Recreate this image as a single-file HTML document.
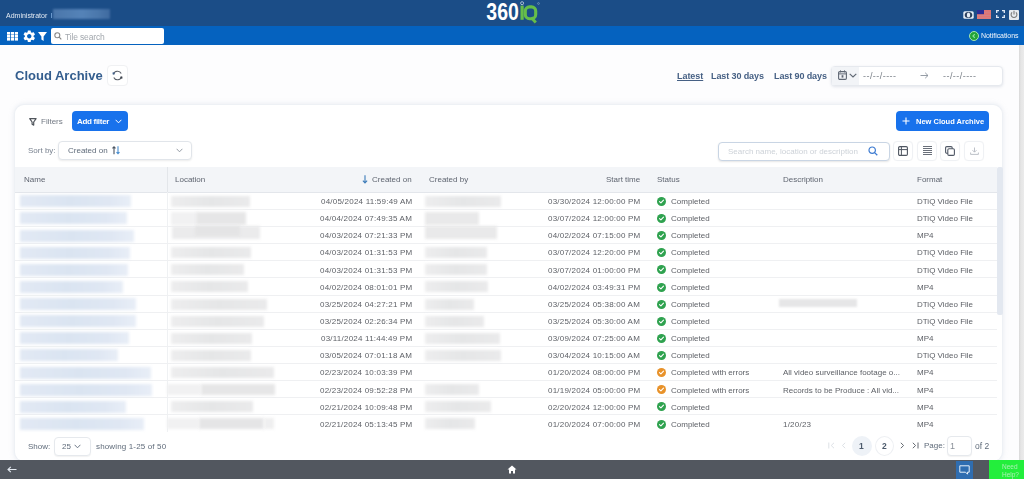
<!DOCTYPE html>
<html><head><meta charset="utf-8">
<style>
*{box-sizing:border-box;margin:0;padding:0}
html,body{width:1024px;height:479px;overflow:hidden;background:#fdfdfe;font-family:"Liberation Sans",sans-serif;position:relative}
.a{position:absolute}
.t{white-space:nowrap;line-height:1;will-change:transform}
#hdr{left:0;top:0;width:1024px;height:26px;background:#1b4d87}
#nav{left:0;top:26px;width:1024px;height:19px;background:#0562bf}
#sb{left:1018.5px;top:45px;width:5.5px;height:415px;background:linear-gradient(90deg,#d9d9d9,#e6e6e6 40%,#ebebeb)}
#bot{left:0;top:460px;width:1024px;height:19px;background:#52575f}
.card{left:15px;top:104.5px;width:987px;height:356px;background:#fff;border-radius:9px;box-shadow:0 0 0 1px #eef1f5,0 0 5px 1px rgba(190,200,215,.35)}
.th{color:#5f6570;font-size:8px}
.rl{left:15px;width:982px;height:1px;background:#eff0f2}
.c{font-size:8px;color:#5e6167}
.dt{letter-spacing:.22px}
.bb{height:12px;background:linear-gradient(90deg,#e2e9f4,#dae4f1 45%,#dfe7f3 80%,#e8eef7);filter:blur(1.8px)}
.gb{height:11px;background:linear-gradient(90deg,#ededee,#e5e6e7 50%,#eaeaeb);filter:blur(1.8px)}
.ib{top:140.5px;width:20px;height:20.5px;border:1px solid #eff1f4;border-radius:4px;background:#fff;box-shadow:0 0 1px rgba(0,0,0,.04)}
</style></head><body>
<div id="hdr" class="a"></div>
<div id="nav" class="a"></div>
<div id="sb" class="a"></div>

<!-- header -->
<div class="a t" style="left:6px;top:11.5px;font-size:7px;color:#e3eaf3">Administrator</div>
<div class="a" style="left:50.5px;top:12.5px;width:1.3px;height:5.5px;background:#6d9bd0"></div>
<div class="a" style="left:53px;top:8.5px;width:57px;height:10.5px;background:linear-gradient(90deg,#4a76aa,#5583b8 50%,#4a77ab 80%,#3f6aa0);filter:blur(1.2px)"></div>
<svg class="a" style="left:484px;top:0px" width="58" height="25" viewBox="0 0 58 25"><text x="2.3" y="19.8" font-family="Liberation Sans" font-weight="bold" font-size="24.3" fill="#fff" textLength="32.5" lengthAdjust="spacingAndGlyphs">360</text><rect x="36.5" y="5.6" width="3.2" height="14.2" fill="#66bd49"/><circle cx="38.1" cy="3.2" r="1.5" stroke="#c9d6e2" stroke-width=".8" fill="none"/><rect x="41.3" y="6.9" width="10.4" height="11.8" rx="4.2" stroke="#66bd49" stroke-width="3.1" fill="none"/><path d="M47.2 17.5L51.8 22.5" stroke="#66bd49" stroke-width="3" /><circle cx="54.5" cy="3.5" r=".9" stroke="#9fb4c8" stroke-width=".5" fill="none"/></svg>
<!-- right header icons -->
<svg class="a" style="left:963px;top:10.5px" width="11" height="8" viewBox="0 0 11 8"><rect x="0.3" y="0.3" width="10.4" height="7.4" rx="1.5" fill="#e8eff7"/><ellipse cx="5.5" cy="4" rx="3.8" ry="2.9" fill="#2b3f5c"/><ellipse cx="5.5" cy="4" rx="1.7" ry="2.6" fill="#e8eff7"/></svg>
<svg class="a" style="left:977px;top:10px" width="14" height="9" viewBox="0 0 14 9"><rect width="14" height="9" fill="#e07575"/><path d="M0 5.5H14 M7 2.2H14 M0 7.8H14" stroke="#c98a92" stroke-width="0.6"/><rect width="7" height="4.2" fill="#2a2d98"/></svg>
<svg class="a" style="left:995.5px;top:10px" width="9" height="8" viewBox="0 0 9 8"><path d="M0.7 3V0.7H3 M6 0.7H8.3V3 M8.3 5V7.3H6 M3 7.3H0.7V5" stroke="#e2ecf8" stroke-width="1.3" fill="none"/></svg>
<div class="a" style="left:1008.5px;top:9.5px;width:10px;height:10px;background:#e6eaef;border-radius:1px"></div>
<svg class="a" style="left:1009.5px;top:10px" width="8" height="9" viewBox="0 0 8 9"><path d="M5.9 2.4A2.9 2.9 0 1 1 2.1 2.4" stroke="#7a7a7a" stroke-width="1.1" fill="none"/><path d="M4 0.8V4.4" stroke="#7a7a7a" stroke-width="1.1"/></svg>

<!-- nav -->
<svg class="a" style="left:7px;top:32px" width="11" height="8.5" viewBox="0 0 11 8.5"><g fill="#fff"><rect x="0" y="0" width="3.2" height="2.6"/><rect x="4" y="0" width="3.2" height="2.6"/><rect x="8" y="0" width="3.2" height="2.6"/><rect x="0" y="3" width="3.2" height="2.6"/><rect x="4" y="3" width="3.2" height="2.6"/><rect x="8" y="3" width="3.2" height="2.6"/><rect x="0" y="6" width="3.2" height="2.6"/><rect x="4" y="6" width="3.2" height="2.6"/><rect x="8" y="6" width="3.2" height="2.6"/></g></svg>
<svg class="a" style="left:21.5px;top:28.5px" width="14.5" height="14.5" viewBox="0 0 24 24"><path fill="#fff" d="M19.14 12.94c.04-.3.06-.61.06-.94s-.02-.64-.07-.94l2.03-1.58a.49.49 0 0 0 .12-.61l-1.92-3.32a.488.488 0 0 0-.59-.22l-2.39.96c-.5-.38-1.03-.7-1.62-.94l-.36-2.54a.484.484 0 0 0-.48-.41h-3.84c-.24 0-.43.17-.47.41l-.36 2.54c-.59.24-1.13.57-1.62.94l-2.39-.96c-.22-.08-.47 0-.59.22L2.74 8.87c-.12.21-.08.47.12.61l2.03 1.58c-.05.3-.09.63-.09.94s.02.64.07.94l-2.03 1.58a.49.49 0 0 0-.12.61l1.92 3.32c.12.22.37.29.59.22l2.39-.96c.5.38 1.03.7 1.62.94l.36 2.54c.05.24.24.41.48.41h3.84c.24 0 .44-.17.47-.41l.36-2.54c.59-.24 1.13-.56 1.62-.94l2.39.96c.22.08.47 0 .59-.22l1.92-3.32c.12-.22.07-.47-.12-.61l-2.01-1.58zM12 15.6c-1.98 0-3.6-1.62-3.6-3.6s1.62-3.6 3.6-3.6 3.6 1.62 3.6 3.6-1.62 3.6-3.6 3.6z"/></svg>
<svg class="a" style="left:38px;top:32px" width="9" height="9" viewBox="0 0 9 9"><path d="M0 0H9L5.6 4.4V9L3.4 7.6V4.4Z" fill="#fff"/></svg>
<div class="a" style="left:51px;top:28px;width:113px;height:16px;background:#fff;border-radius:2px"></div>
<svg class="a" style="left:54px;top:32px" width="8" height="8" viewBox="0 0 8 8"><circle cx="3.3" cy="3.3" r="2.5" stroke="#888" stroke-width="1.1" fill="none"/><path d="M5.2 5.2L7.3 7.3" stroke="#888" stroke-width="1.2"/></svg>
<div class="a t" style="left:65px;top:32.5px;font-size:8.5px;color:#a3a8ae;letter-spacing:-.15px">Tile search</div>
<div class="a" style="left:968.5px;top:31px;width:10px;height:10px;border-radius:50%;background:#22a436;border:1px solid #a6e6ae"></div>
<svg class="a" style="left:970.5px;top:33px" width="6" height="6" viewBox="0 0 6 6"><path d="M3.8 1.2L2 3L3.8 4.8" stroke="#8fe09a" stroke-width="1.2" fill="none"/></svg>
<div class="a t" style="left:980.5px;top:32px;font-size:7px;color:#f2f6fb;letter-spacing:-.05px">Notifications</div>

<!-- title row -->
<div class="a t" style="left:15px;top:68.5px;font-size:13px;font-weight:bold;color:#335d8e">Cloud Archive</div>
<div class="a" style="left:106.5px;top:64.5px;width:21.5px;height:21.5px;border:1px solid #f0f1f3;border-radius:4px;background:#fff"></div>
<svg class="a" style="left:112px;top:70px" width="11" height="11" viewBox="0 0 11 11"><path d="M1.5 4.4A4.1 4.1 0 0 1 9.2 3.6 M9.5 6.6A4.1 4.1 0 0 1 1.8 7.4" stroke="#5a5f68" stroke-width="1.1" fill="none"/><rect x="0.6" y="2.4" width="2" height="2" fill="#3f5f8a"/><rect x="8.4" y="6.6" width="2" height="2" fill="#3d434c"/></svg>
<div class="a t" style="left:677px;top:71.5px;font-size:9px;font-weight:bold;color:#466084;text-decoration:underline;text-decoration-thickness:.8px;letter-spacing:-.05px">Latest</div>
<div class="a t" style="left:711px;top:71.5px;font-size:9px;font-weight:bold;color:#466084;letter-spacing:-.1px">Last 30 days</div>
<div class="a t" style="left:774px;top:71.5px;font-size:9px;font-weight:bold;color:#466084;letter-spacing:-.1px">Last 90 days</div>
<div class="a" style="left:831px;top:66px;width:172px;height:19.5px;border:1px solid #e6e9ee;border-radius:4px;background:#fff;box-shadow:0 1px 3px rgba(60,80,110,.14)"></div>
<div class="a" style="left:832px;top:67px;width:27px;height:18px;background:#f2f4f7"></div>
<svg class="a" style="left:838px;top:70px" width="9" height="10" viewBox="0 0 9 10"><rect x="0.6" y="1.6" width="7.8" height="7.8" rx="1.2" stroke="#5f6773" stroke-width="1.1" fill="none"/><path d="M0.6 3.9H8.4 M2.5 0.4V2.4 M6.5 0.4V2.4" stroke="#5f6773" stroke-width="1"/><rect x="3.6" y="5.2" width="1.8" height="2.4" fill="#5f6773"/></svg>
<svg class="a" style="left:849px;top:73px" width="8" height="5" viewBox="0 0 8 5"><path d="M0.7 0.8L4 4L7.3 0.8" stroke="#5f6773" stroke-width="1.1" fill="none"/></svg>
<div class="a t" style="left:863px;top:72px;font-size:9px;color:#7a8088;letter-spacing:.45px">--/--/----</div>
<svg class="a" style="left:920px;top:72px" width="9" height="7" viewBox="0 0 9 7"><path d="M0.5 3.5H8 M5.2 0.8L8 3.5L5.2 6.2" stroke="#8a929c" stroke-width="0.9" fill="none"/></svg>
<div class="a t" style="left:943px;top:72px;font-size:9px;color:#7a8088;letter-spacing:.45px">--/--/----</div>

<!-- card -->
<div class="a card"></div>
<svg class="a" style="left:29px;top:117.5px" width="8" height="8" viewBox="0 0 8 8"><path d="M0.7 0.7H7.1L4.7 4V7.1L3.1 6.3V4Z" stroke="#50555c" stroke-width="1.2" fill="none" stroke-linejoin="round"/></svg>
<div class="a t" style="left:41px;top:117.7px;font-size:8px;color:#737a84">Filters</div>
<div class="a" style="left:72.3px;top:110.8px;width:56px;height:20px;background:#1872ec;border-radius:4px"></div>
<div class="a t" style="left:76.7px;top:117.5px;font-size:8px;font-weight:bold;color:#fff;letter-spacing:-.3px">Add filter</div>
<svg class="a" style="left:115.3px;top:119px" width="7" height="5" viewBox="0 0 7 5"><path d="M0.6 0.8L3.5 3.8L6.4 0.8" stroke="#fff" stroke-width="1" fill="none"/></svg>
<div class="a" style="left:895.5px;top:110.8px;width:93.5px;height:20px;background:#1872ec;border-radius:4px"></div>
<svg class="a" style="left:902px;top:117px" width="8" height="8" viewBox="0 0 8 8"><path d="M4 0.5V7.5 M0.5 4H7.5" stroke="#fff" stroke-width="1.1"/></svg>
<div class="a t" style="left:916px;top:117.5px;font-size:7.5px;font-weight:bold;color:#fff">New Cloud Archive</div>
<div class="a t" style="left:28px;top:146.5px;font-size:8px;color:#7a8390">Sort by:</div>
<div class="a" style="left:58px;top:140.5px;width:134px;height:19px;border:1px solid #e1e5ea;border-radius:4px;box-shadow:0 1px 2px rgba(0,0,0,.08);background:#fff"></div>
<div class="a t" style="left:68px;top:146.5px;font-size:8px;color:#5f6b7a">Created on</div>
<svg class="a" style="left:112px;top:146px" width="8" height="8.5" viewBox="0 0 8 8.5"><path d="M2 8.2V0.9 M0.5 2.4L2 0.8L3.5 2.4" stroke="#4a5462" stroke-width="1.1" fill="none"/><path d="M6 0.3V7.6 M4.5 6.1L6 7.7L7.5 6.1" stroke="#4a8fd0" stroke-width="1.1" fill="none"/></svg>
<svg class="a" style="left:176px;top:148px" width="7" height="5" viewBox="0 0 7 5"><path d="M0.6 0.8L3.5 3.8L6.4 0.8" stroke="#8a929c" stroke-width="0.9" fill="none"/></svg>
<div class="a" style="left:718px;top:142px;width:172px;height:19px;border:1px solid #c9d5e4;border-radius:4px;box-shadow:0 1px 2px rgba(0,0,0,.1);background:#fff"></div>
<div class="a t" style="left:728px;top:148px;font-size:8px;color:#cdd2d8">Search name, location or description</div>
<svg class="a" style="left:868px;top:146px" width="10" height="10" viewBox="0 0 10 10"><circle cx="4.2" cy="4.2" r="3.2" stroke="#3d7bd1" stroke-width="1.2" fill="none"/><path d="M6.6 6.6L9.3 9.3" stroke="#3d7bd1" stroke-width="1.3"/></svg>
<div class="a ib" style="left:893px"></div>
<div class="a ib" style="left:917px"></div>
<div class="a ib" style="left:940px"></div>
<div class="a ib" style="left:964px"></div>
<svg class="a" style="left:898px;top:146px" width="10" height="10" viewBox="0 0 10 10"><rect x="0.6" y="0.6" width="8.8" height="8.8" rx="1.2" stroke="#4f5661" stroke-width="1.1" fill="none"/><path d="M0.6 3.6H9.4 M3.4 0.6V9.4" stroke="#4f5661" stroke-width="1"/></svg>
<svg class="a" style="left:923px;top:146px" width="9" height="10" viewBox="0 0 9 10"><path d="M0 0.5H9 M0 2.5H9 M0 4.5H9 M0 6.5H9 M0 8.5H9" stroke="#6a707a" stroke-width="1"/></svg>
<svg class="a" style="left:945px;top:146px" width="10" height="10" viewBox="0 0 10 10"><rect x="0.6" y="0.6" width="6.6" height="6.6" rx="1.2" stroke="#505866" stroke-width="1.1" fill="none"/><rect x="2.8" y="2.8" width="6.6" height="6.6" rx="1.2" stroke="#505866" stroke-width="1.1" fill="#fff"/></svg>
<svg class="a" style="left:970px;top:147px" width="9" height="8" viewBox="0 0 9 8"><path d="M4.5 0.5V5 M2.5 3.2L4.5 5.2L6.5 3.2 M0.6 5.5V7.4H8.4V5.5" stroke="#b5bac2" stroke-width="0.9" fill="none"/></svg>

<!-- table header -->
<div class="a" style="left:15px;top:166.8px;width:982px;height:25.8px;background:#f3f5f8;border-bottom:1px solid #e3e6eb"></div>
<div class="a" style="left:167px;top:167px;width:1px;height:25px;background:#e3e6ea"></div><div class="a" style="left:167px;top:192px;width:1px;height:240px;background:#eff1f3"></div>
<div class="a t th" style="left:24px;top:176px">Name</div>
<div class="a t th" style="left:175px;top:176px">Location</div>
<svg class="a" style="left:362px;top:175px" width="6" height="9" viewBox="0 0 6 9"><path d="M3 0.3V8 M0.9 5.7L3 8L5.1 5.7" stroke="#3a7ab8" stroke-width="1.1" fill="none"/></svg>
<div class="a t th" style="right:612px;top:176px">Created on</div>
<div class="a t th" style="left:429px;top:176px">Created by</div>
<div class="a t th" style="right:384px;top:176px">Start time</div>
<div class="a t th" style="left:657px;top:176px">Status</div>
<div class="a t th" style="left:783px;top:176px">Description</div>
<div class="a t th" style="left:917px;top:176px">Format</div>
<div class="a" style="left:997px;top:167px;width:6px;height:148px;background:#e3e8f0;border-radius:2px;filter:blur(.6px)"></div>

<div class="a rl" style="top:208.93px"></div>
<div class="a rl" style="top:226.06px"></div>
<div class="a rl" style="top:243.19px"></div>
<div class="a rl" style="top:260.32px"></div>
<div class="a rl" style="top:277.45px"></div>
<div class="a rl" style="top:294.58px"></div>
<div class="a rl" style="top:311.71px"></div>
<div class="a rl" style="top:328.84px"></div>
<div class="a rl" style="top:345.97px"></div>
<div class="a rl" style="top:363.10px"></div>
<div class="a rl" style="top:380.23px"></div>
<div class="a rl" style="top:397.36px"></div>
<div class="a rl" style="top:414.49px"></div>
<div class="a bb" style="left:20px;top:195.30px;width:111px"></div>
<div class="a gb" style="left:171px;top:195.80px;width:79px"></div>
<div class="a gb" style="left:425px;top:195.80px;width:76px"></div>
<div class="a t c dt" style="right:612px;top:198.10px">04/05/2024 11:59:49 AM</div>
<div class="a t c dt" style="right:383.70000000000005px;top:198.10px">03/30/2024 12:00:00 PM</div>
<svg class="a" style="left:657.3px;top:196.90px" width="9" height="9" viewBox="0 0 9 9"><circle cx="4.5" cy="4.5" r="4.5" fill="#2fa24f"/><path d="M2.5 4.6 L3.9 5.9 L6.5 3.2" stroke="#fff" stroke-width="1.1" fill="none" stroke-linecap="round" stroke-linejoin="round"/></svg>
<div class="a t c" style="left:671px;top:198.10px">Completed</div>
<div class="a t c" style="left:917px;top:198.10px">DTiQ Video File</div>
<div class="a bb" style="left:20px;top:212.43px;width:107px"></div>
<div class="a" style="left:171px;top:212.43px;width:26px;height:12.50px;background:#f1f1f2;filter:blur(1.6px)"></div>
<div class="a" style="left:196px;top:211.93px;width:50px;height:13.00px;background:#e6e6e7;filter:blur(1.6px)"></div>
<div class="a" style="left:425px;top:211.93px;width:54px;height:13.00px;background:#e9e9ea;filter:blur(1.6px)"></div>
<div class="a t c dt" style="right:612px;top:215.23px">04/04/2024 07:49:35 AM</div>
<div class="a t c dt" style="right:383.70000000000005px;top:215.23px">03/07/2024 12:00:00 PM</div>
<svg class="a" style="left:657.3px;top:214.03px" width="9" height="9" viewBox="0 0 9 9"><circle cx="4.5" cy="4.5" r="4.5" fill="#2fa24f"/><path d="M2.5 4.6 L3.9 5.9 L6.5 3.2" stroke="#fff" stroke-width="1.1" fill="none" stroke-linecap="round" stroke-linejoin="round"/></svg>
<div class="a t c" style="left:671px;top:215.23px">Completed</div>
<div class="a t c" style="left:917px;top:215.23px">DTiQ Video File</div>
<div class="a bb" style="left:20px;top:229.56px;width:114px"></div>
<div class="a" style="left:172px;top:226.06px;width:88px;height:12.50px;background:#ebebec;filter:blur(1.6px)"></div>
<div class="a" style="left:195px;top:226.06px;width:45px;height:10.00px;background:#e4e4e5;filter:blur(1.6px)"></div>
<div class="a" style="left:425px;top:226.06px;width:72px;height:12.50px;background:#e9e9ea;filter:blur(1.6px)"></div>
<div class="a t c dt" style="right:612px;top:232.36px">04/03/2024 07:21:33 PM</div>
<div class="a t c dt" style="right:383.70000000000005px;top:232.36px">04/02/2024 07:15:00 PM</div>
<svg class="a" style="left:657.3px;top:231.16px" width="9" height="9" viewBox="0 0 9 9"><circle cx="4.5" cy="4.5" r="4.5" fill="#2fa24f"/><path d="M2.5 4.6 L3.9 5.9 L6.5 3.2" stroke="#fff" stroke-width="1.1" fill="none" stroke-linecap="round" stroke-linejoin="round"/></svg>
<div class="a t c" style="left:671px;top:232.36px">Completed</div>
<div class="a t c" style="left:917px;top:232.36px">MP4</div>
<div class="a bb" style="left:20px;top:246.69px;width:110px"></div>
<div class="a gb" style="left:171px;top:247.19px;width:80px"></div>
<div class="a gb" style="left:425px;top:247.19px;width:62px"></div>
<div class="a t c dt" style="right:612px;top:249.49px">04/03/2024 01:31:53 PM</div>
<div class="a t c dt" style="right:383.70000000000005px;top:249.49px">03/07/2024 12:20:00 PM</div>
<svg class="a" style="left:657.3px;top:248.29px" width="9" height="9" viewBox="0 0 9 9"><circle cx="4.5" cy="4.5" r="4.5" fill="#2fa24f"/><path d="M2.5 4.6 L3.9 5.9 L6.5 3.2" stroke="#fff" stroke-width="1.1" fill="none" stroke-linecap="round" stroke-linejoin="round"/></svg>
<div class="a t c" style="left:671px;top:249.49px">Completed</div>
<div class="a t c" style="left:917px;top:249.49px">DTiQ Video File</div>
<div class="a bb" style="left:20px;top:263.82px;width:108px"></div>
<div class="a gb" style="left:171px;top:264.32px;width:73px"></div>
<div class="a gb" style="left:425px;top:264.32px;width:62px"></div>
<div class="a t c dt" style="right:612px;top:266.62px">04/03/2024 01:31:53 PM</div>
<div class="a t c dt" style="right:383.70000000000005px;top:266.62px">03/07/2024 01:00:00 PM</div>
<svg class="a" style="left:657.3px;top:265.42px" width="9" height="9" viewBox="0 0 9 9"><circle cx="4.5" cy="4.5" r="4.5" fill="#2fa24f"/><path d="M2.5 4.6 L3.9 5.9 L6.5 3.2" stroke="#fff" stroke-width="1.1" fill="none" stroke-linecap="round" stroke-linejoin="round"/></svg>
<div class="a t c" style="left:671px;top:266.62px">Completed</div>
<div class="a t c" style="left:917px;top:266.62px">DTiQ Video File</div>
<div class="a bb" style="left:20px;top:280.95px;width:103px"></div>
<div class="a gb" style="left:171px;top:281.45px;width:77px"></div>
<div class="a gb" style="left:425px;top:281.45px;width:63px"></div>
<div class="a t c dt" style="right:612px;top:283.75px">04/02/2024 08:01:01 PM</div>
<div class="a t c dt" style="right:383.70000000000005px;top:283.75px">04/02/2024 03:49:31 PM</div>
<svg class="a" style="left:657.3px;top:282.55px" width="9" height="9" viewBox="0 0 9 9"><circle cx="4.5" cy="4.5" r="4.5" fill="#2fa24f"/><path d="M2.5 4.6 L3.9 5.9 L6.5 3.2" stroke="#fff" stroke-width="1.1" fill="none" stroke-linecap="round" stroke-linejoin="round"/></svg>
<div class="a t c" style="left:671px;top:283.75px">Completed</div>
<div class="a t c" style="left:917px;top:283.75px">MP4</div>
<div class="a bb" style="left:20px;top:298.08px;width:116px"></div>
<div class="a gb" style="left:171px;top:298.58px;width:96px"></div>
<div class="a gb" style="left:425px;top:298.58px;width:49px"></div>
<div class="a t c dt" style="right:612px;top:300.88px">03/25/2024 04:27:21 PM</div>
<div class="a t c dt" style="right:383.70000000000005px;top:300.88px">03/25/2024 05:38:00 AM</div>
<svg class="a" style="left:657.3px;top:299.68px" width="9" height="9" viewBox="0 0 9 9"><circle cx="4.5" cy="4.5" r="4.5" fill="#2fa24f"/><path d="M2.5 4.6 L3.9 5.9 L6.5 3.2" stroke="#fff" stroke-width="1.1" fill="none" stroke-linecap="round" stroke-linejoin="round"/></svg>
<div class="a t c" style="left:671px;top:300.88px">Completed</div>
<div class="a" style="left:778.5px;top:298.88px;width:78px;height:8.5px;background:#e6e6e7;filter:blur(.9px)"></div>
<div class="a t c" style="left:917px;top:300.88px">DTiQ Video File</div>
<div class="a bb" style="left:20px;top:315.21px;width:116px"></div>
<div class="a gb" style="left:171px;top:315.71px;width:93px"></div>
<div class="a gb" style="left:425px;top:315.71px;width:59px"></div>
<div class="a t c dt" style="right:612px;top:318.01px">03/25/2024 02:26:34 PM</div>
<div class="a t c dt" style="right:383.70000000000005px;top:318.01px">03/25/2024 05:30:00 AM</div>
<svg class="a" style="left:657.3px;top:316.81px" width="9" height="9" viewBox="0 0 9 9"><circle cx="4.5" cy="4.5" r="4.5" fill="#2fa24f"/><path d="M2.5 4.6 L3.9 5.9 L6.5 3.2" stroke="#fff" stroke-width="1.1" fill="none" stroke-linecap="round" stroke-linejoin="round"/></svg>
<div class="a t c" style="left:671px;top:318.01px">Completed</div>
<div class="a t c" style="left:917px;top:318.01px">DTiQ Video File</div>
<div class="a bb" style="left:20px;top:332.34px;width:109px"></div>
<div class="a gb" style="left:171px;top:332.84px;width:81px"></div>
<div class="a gb" style="left:425px;top:332.84px;width:75px"></div>
<div class="a t c dt" style="right:612px;top:335.14px">03/11/2024 11:44:49 PM</div>
<div class="a t c dt" style="right:383.70000000000005px;top:335.14px">03/09/2024 07:25:00 AM</div>
<svg class="a" style="left:657.3px;top:333.94px" width="9" height="9" viewBox="0 0 9 9"><circle cx="4.5" cy="4.5" r="4.5" fill="#2fa24f"/><path d="M2.5 4.6 L3.9 5.9 L6.5 3.2" stroke="#fff" stroke-width="1.1" fill="none" stroke-linecap="round" stroke-linejoin="round"/></svg>
<div class="a t c" style="left:671px;top:335.14px">Completed</div>
<div class="a t c" style="left:917px;top:335.14px">MP4</div>
<div class="a bb" style="left:20px;top:349.47px;width:98px"></div>
<div class="a gb" style="left:171px;top:349.97px;width:80px"></div>
<div class="a gb" style="left:425px;top:349.97px;width:76px"></div>
<div class="a t c dt" style="right:612px;top:352.27px">03/05/2024 07:01:18 AM</div>
<div class="a t c dt" style="right:383.70000000000005px;top:352.27px">03/04/2024 10:15:00 AM</div>
<svg class="a" style="left:657.3px;top:351.07px" width="9" height="9" viewBox="0 0 9 9"><circle cx="4.5" cy="4.5" r="4.5" fill="#2fa24f"/><path d="M2.5 4.6 L3.9 5.9 L6.5 3.2" stroke="#fff" stroke-width="1.1" fill="none" stroke-linecap="round" stroke-linejoin="round"/></svg>
<div class="a t c" style="left:671px;top:352.27px">Completed</div>
<div class="a t c" style="left:917px;top:352.27px">DTiQ Video File</div>
<div class="a bb" style="left:20px;top:366.60px;width:131px"></div>
<div class="a gb" style="left:171px;top:367.10px;width:103px"></div>
<div class="a t c dt" style="right:612px;top:369.40px">02/23/2024 10:03:39 PM</div>
<div class="a t c dt" style="right:383.70000000000005px;top:369.40px">01/20/2024 08:00:00 PM</div>
<svg class="a" style="left:657.3px;top:368.20px" width="9" height="9" viewBox="0 0 9 9"><circle cx="4.5" cy="4.5" r="4.5" fill="#e8922a"/><path d="M2.5 4.6 L3.9 5.9 L6.5 3.2" stroke="#fff" stroke-width="1.1" fill="none" stroke-linecap="round" stroke-linejoin="round"/></svg>
<div class="a t c" style="left:671px;top:369.40px">Completed with errors</div>
<div class="a t c" style="left:783px;top:369.40px">All video surveillance footage o...</div>
<div class="a t c" style="left:917px;top:369.40px">MP4</div>
<div class="a bb" style="left:20px;top:383.73px;width:132px"></div>
<div class="a gb" style="left:425px;top:384.23px;width:54px"></div>
<div class="a" style="left:167px;top:384.23px;width:34px;height:11.00px;background:#f1f1f2;filter:blur(1.6px)"></div>
<div class="a" style="left:201px;top:384.23px;width:74px;height:11.00px;background:#e6e6e7;filter:blur(1.6px)"></div>
<div class="a t c dt" style="right:612px;top:386.53px">02/23/2024 09:52:28 PM</div>
<div class="a t c dt" style="right:383.70000000000005px;top:386.53px">01/19/2024 05:00:00 PM</div>
<svg class="a" style="left:657.3px;top:385.33px" width="9" height="9" viewBox="0 0 9 9"><circle cx="4.5" cy="4.5" r="4.5" fill="#e8922a"/><path d="M2.5 4.6 L3.9 5.9 L6.5 3.2" stroke="#fff" stroke-width="1.1" fill="none" stroke-linecap="round" stroke-linejoin="round"/></svg>
<div class="a t c" style="left:671px;top:386.53px">Completed with errors</div>
<div class="a t c" style="left:783px;top:386.53px">Records to be Produce : All vid...</div>
<div class="a t c" style="left:917px;top:386.53px">MP4</div>
<div class="a bb" style="left:20px;top:400.86px;width:106px"></div>
<div class="a gb" style="left:171px;top:401.36px;width:82px"></div>
<div class="a gb" style="left:425px;top:401.36px;width:66px"></div>
<div class="a t c dt" style="right:612px;top:403.66px">02/21/2024 10:09:48 PM</div>
<div class="a t c dt" style="right:383.70000000000005px;top:403.66px">02/20/2024 12:00:00 PM</div>
<svg class="a" style="left:657.3px;top:402.46px" width="9" height="9" viewBox="0 0 9 9"><circle cx="4.5" cy="4.5" r="4.5" fill="#2fa24f"/><path d="M2.5 4.6 L3.9 5.9 L6.5 3.2" stroke="#fff" stroke-width="1.1" fill="none" stroke-linecap="round" stroke-linejoin="round"/></svg>
<div class="a t c" style="left:671px;top:403.66px">Completed</div>
<div class="a t c" style="left:917px;top:403.66px">MP4</div>
<div class="a bb" style="left:20px;top:417.99px;width:124px"></div>
<div class="a gb" style="left:425px;top:418.49px;width:50px"></div>
<div class="a" style="left:167px;top:418.49px;width:32px;height:11.00px;background:#f1f1f2;filter:blur(1.6px)"></div>
<div class="a" style="left:199px;top:418.49px;width:65px;height:11.00px;background:#e5e5e6;filter:blur(1.6px)"></div>
<div class="a" style="left:264px;top:418.49px;width:10px;height:11.00px;background:#efeff0;filter:blur(1.6px)"></div>
<div class="a t c dt" style="right:612px;top:420.79px">02/21/2024 05:13:45 PM</div>
<div class="a t c dt" style="right:383.70000000000005px;top:420.79px">01/20/2024 07:00:00 PM</div>
<svg class="a" style="left:657.3px;top:419.59px" width="9" height="9" viewBox="0 0 9 9"><circle cx="4.5" cy="4.5" r="4.5" fill="#2fa24f"/><path d="M2.5 4.6 L3.9 5.9 L6.5 3.2" stroke="#fff" stroke-width="1.1" fill="none" stroke-linecap="round" stroke-linejoin="round"/></svg>
<div class="a t c" style="left:671px;top:420.79px">Completed</div>
<div class="a t c dt" style="left:783px;top:420.79px">1/20/23</div>
<div class="a t c" style="left:917px;top:420.79px">MP4</div>

<!-- footer -->
<div class="a t" style="left:28px;top:442.5px;font-size:8px;color:#5f6b7a">Show:</div>
<div class="a" style="left:53.5px;top:436.5px;width:37px;height:19px;border:1px solid #e6e9ed;border-radius:4px;background:#fff;box-shadow:0 1px 1px rgba(0,0,0,.05)"></div>
<div class="a t" style="left:62px;top:442.5px;font-size:8px;color:#5f6b7a">25</div>
<svg class="a" style="left:74px;top:444px" width="7" height="5" viewBox="0 0 7 5"><path d="M0.6 0.8L3.5 3.8L6.4 0.8" stroke="#5f6b7a" stroke-width="0.9" fill="none"/></svg>
<div class="a t" style="left:96px;top:442.5px;font-size:8px;color:#5f6b7a;letter-spacing:.15px">showing 1-25 of 50</div>

<!-- pagination -->
<svg class="a" style="left:828px;top:442px" width="7" height="7" viewBox="0 0 7 7"><path d="M0.8 0.5V6.5 M6 0.8L3.2 3.5L6 6.2" stroke="#dde1e6" stroke-width="1" fill="none"/></svg>
<svg class="a" style="left:841px;top:442px" width="5" height="7" viewBox="0 0 5 7"><path d="M4.2 0.8L1.4 3.5L4.2 6.2" stroke="#dde1e6" stroke-width="1" fill="none"/></svg>
<div class="a" style="left:852px;top:436px;width:20px;height:20px;border-radius:50%;background:#eef2f7"></div>
<div class="a t" style="left:859px;top:442px;font-size:8.5px;font-weight:bold;color:#4d5b6c">1</div>
<div class="a" style="left:875px;top:436px;width:19px;height:20px;border-radius:50%;border:1px solid #eef0f3;background:#fff"></div>
<div class="a t" style="left:882px;top:442px;font-size:8.5px;font-weight:bold;color:#4d5b6c">2</div>
<svg class="a" style="left:900px;top:442px" width="5" height="7" viewBox="0 0 5 7"><path d="M0.8 0.8L3.6 3.5L0.8 6.2" stroke="#666b72" stroke-width="1" fill="none"/></svg>
<svg class="a" style="left:912px;top:442px" width="7" height="7" viewBox="0 0 7 7"><path d="M0.8 0.8L3.6 3.5L0.8 6.2 M6 0.5V6.5" stroke="#666b72" stroke-width="1" fill="none"/></svg>
<div class="a t" style="left:924px;top:442px;font-size:8px;color:#5f6b7a">Page:</div>
<div class="a" style="left:947px;top:436px;width:25px;height:20px;border:1px solid #e6e9ed;border-radius:4px;background:#fff;box-shadow:0 1px 1px rgba(0,0,0,.05)"></div>
<div class="a t" style="left:950px;top:441.5px;font-size:9px;color:#8a9099">1</div>
<div class="a t" style="left:975px;top:442px;font-size:8.5px;color:#5f6b7a">of 2</div>

<div id="bot" class="a"></div>
<svg class="a" style="left:7px;top:466px" width="10" height="7" viewBox="0 0 10 7"><path d="M9.5 3.5H1 M3.8 0.8L1 3.5L3.8 6.2" stroke="#e3e9f0" stroke-width="1.1" fill="none"/></svg>
<svg class="a" style="left:507px;top:465px" width="10" height="9" viewBox="0 0 10 9"><path d="M5 0.5L0.5 4.5H2V8.5H4V6H6V8.5H8V4.5H9.5Z" fill="#fff"/></svg>
<div class="a" style="left:956px;top:461px;width:17px;height:18px;background:#2f6db0"></div>
<svg class="a" style="left:959px;top:465px" width="11" height="10" viewBox="0 0 11 10"><path d="M0.8 0.8H10.2V7.2H8.5V9.2L6.5 7.2H0.8Z" stroke="#e6f0fa" stroke-width="1" fill="none"/></svg>
<div class="a" style="left:989px;top:460px;width:35px;height:19px;background:#23ee3c"></div>
<div class="a t" style="left:1002px;top:463px;font-size:6.5px;color:#a9f0b3;line-height:7.5px">Need<br>Help?</div>
</body></html>
